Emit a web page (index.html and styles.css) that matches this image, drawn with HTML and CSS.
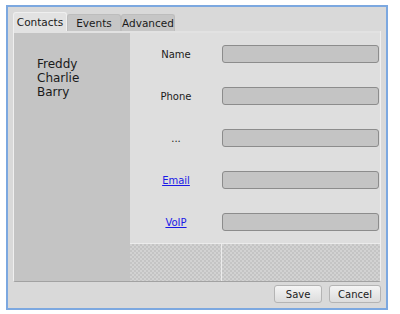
FILE: index.html
```html
<!DOCTYPE html>
<html>
<head>
    <title>Contacts</title>
    <link rel="stylesheet" href="styles.css">
</head>
<body>
    <div class="window">
        <div class="tabs">
            <div class="tab active">Contacts</div>
            <div class="tab">Events</div>
            <div class="tab">Advanced</div>
        </div>
        <div class="pane">
            <div class="people">
                <div>Freddy</div>
                <div>Charlie</div>
                <div>Barry</div>
            </div>
            <div class="details">
                <div class="form">
                    <label>Name</label><div class="field"></div>
                    <label>Phone</label><div class="field"></div>
                    <label>...</label><div class="field"></div>
                    <label><a href="#">Email</a></label><div class="field"></div>
                    <label><a href="#">VoIP</a></label><div class="field"></div>
                </div>
                <div class="filler">
                    <div class="cell"></div>
                    <div class="cell"></div>
                </div>
            </div>
        </div>
        <div class="buttons">
            <button>Save</button>
            <button>Cancel</button>
        </div>
    </div>
</body>
</html>
```
FILE: styles.css
```css
html, body {
    margin: 0;
    background: #ffffff;
}

body {
    font-family: "DejaVu Sans", sans-serif;
    font-size: 11px;
    color: #1a1a1a;
}

.window {
    box-sizing: border-box;
    margin: 5px 0 0 6px;
    width: 382px;
    height: 305px;
    border: 2px solid #7ca8e0;
    background: #d9d9d9;
    padding: 5px 4px 0 5px;
}

.tabs {
    display: flex;
    align-items: flex-end;
    height: 19px;
}

.tab {
    box-sizing: border-box;
    width: 54px;
    height: 17px;
    text-align: center;
    font-size: 10.5px;
    line-height: 17px;
    background: #c6c6c6;
    border: 1px solid #bdbdbd;
    border-bottom: none;
    border-radius: 3px 3px 0 0;
}

.tab.active {
    height: 19px;
    line-height: 19px;
    background: #e2e2e2;
    border-color: #efefef;
}

.pane {
    box-sizing: border-box;
    height: 251px;
    width: 368px;
    display: flex;
    background: #e2e2e2;
    border: 1px solid #efefef;
    border-top: none;
    border-bottom-color: #a2a2a2;
    border-radius: 0 0 2px 2px;
    padding-top: 2px;
}

.people {
    width: 116px;
    background: #c4c4c4;
    padding: 24px 0 0 23px;
    box-sizing: border-box;
    font-size: 12px;
    line-height: 14px;
}

.details {
    flex: 1;
    display: flex;
    flex-direction: column;
    background: #dedede;
}

.form {
    display: grid;
    grid-template-columns: 92px 157px;
    grid-auto-rows: 42px;
    align-items: center;
    font-size: 10px;
}

.form label {
    text-align: center;
}

.form a {
    color: #1a1ae6;
}

.field {
    box-sizing: border-box;
    height: 18px;
    background: #c4c4c4;
    border: 1px solid #8c8c8c;
    border-radius: 3px;
}

.filler {
    flex: 1;
    display: flex;
    border-top: 1px solid #ececec;
}

.cell {
    background: conic-gradient(#c4c4c4 25%, #d2d2d2 0 50%, #c4c4c4 0 75%, #d2d2d2 0) 0 0 / 4px 4px;
}

.cell:first-child {
    width: 91px;
    border-right: 1px solid #ececec;
}

.cell:last-child {
    flex: 1;
}

.buttons {
    display: flex;
    justify-content: flex-end;
    gap: 7px;
    margin-top: 3px;
    padding-right: 1px;
}

button {
    box-sizing: border-box;
    min-width: 48px;
    height: 18px;
    padding: 0 8px;
    font-family: "DejaVu Sans", sans-serif;
    font-size: 10px;
    color: #1a1a1a;
    background: linear-gradient(#f4f4f4, #dcdcdc);
    border: 1px solid #b4b4b4;
    border-radius: 3px;
}
```
